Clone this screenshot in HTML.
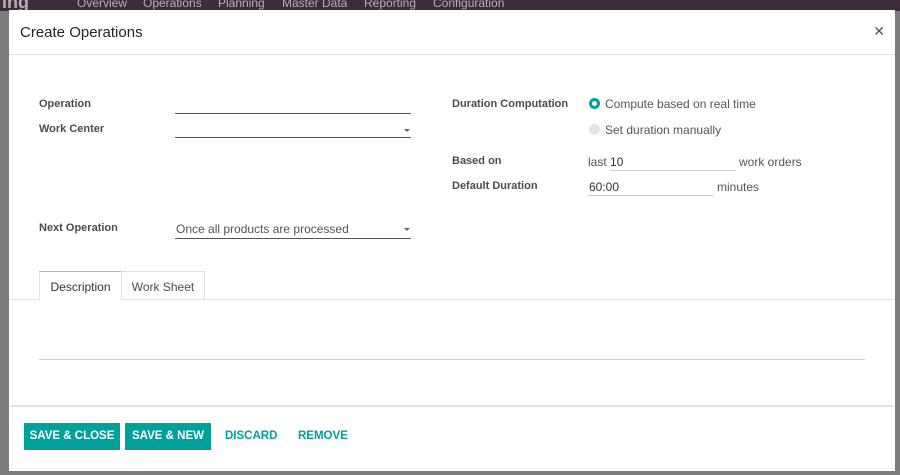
<!DOCTYPE html>
<html><head><style>
*{box-sizing:border-box;margin:0;padding:0}
body{width:900px;height:475px;overflow:hidden;background:#7c7c7c;font-family:"Liberation Sans",sans-serif;position:relative;color:#4c4c4c}
.nav{position:absolute;left:0;top:0;width:900px;height:11px;background:#3f2c3a;color:#b9aeb5;font-size:12px;overflow:hidden}
.nav span{position:absolute;top:-4px}
.modal{position:absolute;left:9px;top:10px;width:886px;height:461px;background:#fff}
.hdr{height:45px;border-bottom:1px solid #dee2e6;padding:14px 11px;font-size:15px;color:#212529}
.x{position:absolute;right:10px;top:13px;font-size:14px;color:#555}
.lbl{position:absolute;font-size:11px;font-weight:bold;color:#4c4c4c;white-space:nowrap}
.t{position:absolute;font-size:12px;color:#555;white-space:nowrap}
.ln{position:absolute;border-bottom:1.5px solid #555}
.lnl{position:absolute;border-bottom:1px solid #ccc}
.car{position:absolute;width:0;height:0;border-left:3.5px solid transparent;border-right:3.5px solid transparent;border-top:3.5px solid #666}
.tab{position:absolute;top:271px;height:29px;font-size:12px;padding:8px 0;text-align:center;border:1px solid #dee2e6;background:#fff;white-space:nowrap}
.btn{position:absolute;top:423px;height:27px;background:#00a09d;color:#fff;font-weight:bold;font-size:11.5px;padding:7px 0;text-align:center;white-space:nowrap}
.lk{position:absolute;top:430px;color:#00a09d;font-weight:bold;font-size:11.5px}
</style></head><body>
<div class="nav"><span style="left:2px;font-size:18px;top:-8px;font-weight:bold">ing</span><span style="left:77px">Overview</span><span style="left:143px">Operations</span><span style="left:218px">Planning</span><span style="left:282px">Master Data</span><span style="left:364px">Reporting</span><span style="left:433px">Configuration</span></div>
<div class="modal">
<div class="hdr">Create Operations</div><div class="x">✕</div>
</div>
<div class="lbl" style="left:39px;top:98px">Operation</div>
<div class="ln" style="left:175px;top:104px;width:236px;height:10px"></div>
<div class="lbl" style="left:39px;top:123px">Work Center</div>
<div class="ln" style="left:175px;top:128px;width:236px;height:10px"></div>
<div class="car" style="left:404px;top:129px"></div>
<div class="lbl" style="left:39px;top:222px">Next Operation</div>
<div class="t" style="left:176px;top:222px">Once all products are processed</div>
<div class="ln" style="left:175px;top:228px;width:236px;height:11px"></div>
<div class="car" style="left:404px;top:228px"></div>
<div class="lbl" style="left:452px;top:98px">Duration Computation</div>
<div style="position:absolute;left:589px;top:98px;width:11px;height:11px;border-radius:50%;background:#00a09d"><div style="margin:3px;width:5px;height:5px;border-radius:50%;background:#fff"></div></div>
<div class="t" style="left:605px;top:97px">Compute based on real time</div>
<div style="position:absolute;left:589px;top:124px;width:11px;height:11px;border-radius:50%;background:#e1e3e6"></div>
<div class="t" style="left:605px;top:123px">Set duration manually</div>
<div class="lbl" style="left:452px;top:155px">Based on</div>
<div class="t" style="left:588px;top:155px">last <span style="color:#333">10</span></div>
<div class="lnl" style="left:610px;top:160px;width:126px;height:11px"></div>
<div class="t" style="left:739px;top:155px">work orders</div>
<div class="lbl" style="left:452px;top:180px">Default Duration</div>
<div class="t" style="left:589px;top:180px;color:#333">60:00</div>
<div class="lnl" style="left:588px;top:185px;width:126px;height:11px"></div>
<div class="t" style="left:717px;top:180px">minutes</div>
<div style="position:absolute;left:10px;top:299px;width:884px;border-top:1px solid #dee2e6"></div>
<div class="tab" style="left:39px;width:83px;border-bottom-color:#fff;border-top:1px solid #c9a9bf;height:30px;color:#333">Description</div>
<div class="tab" style="left:121px;width:84px">Work Sheet</div>
<div class="lnl" style="left:39px;top:359px;width:826px;height:0"></div>
<div style="position:absolute;left:10px;top:405px;width:884px;border-top:2px solid #dee2e6"></div>
<div class="btn" style="left:24px;width:96px">SAVE &amp; CLOSE</div>
<div class="btn" style="left:125px;width:86px">SAVE &amp; NEW</div>
<div class="lk" style="left:225px">DISCARD</div>
<div class="lk" style="left:298px">REMOVE</div>
</body></html>
